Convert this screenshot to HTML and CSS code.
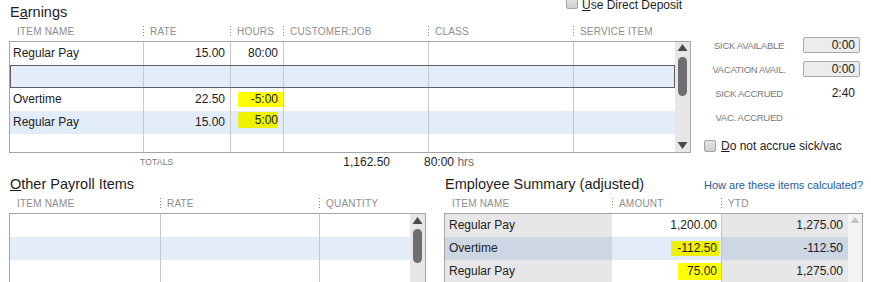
FILE: index.html
```html
<!DOCTYPE html>
<html>
<head>
<meta charset="utf-8">
<link rel="stylesheet" href="styles.css">
</head>
<body>
<div class="app">
  <div class="top">
    <section class="earnings">
      <div class="title-row">
        <h2 class="title">E<u>a</u>rnings</h2>
        <label class="check dd"><span class="box"></span><span><u>U</u>se Direct Deposit</span></label>
      </div>
      <div class="head cols-e">
        <div>ITEM NAME</div>
        <div class="sep">RATE</div>
        <div class="sep">HOURS</div>
        <div class="sep">CUSTOMER:JOB</div>
        <div class="sep">CLASS</div>
        <div class="sep">SERVICE ITEM</div>
      </div>
      <div class="grid e-grid">
        <div class="rows">
          <div class="row cols-e"><div>Regular Pay</div><div class="num">15.00</div><div class="num">80:00</div><div></div><div></div><div></div></div>
          <div class="row cols-e sel"><div></div><div></div><div></div><div></div><div></div><div></div></div>
          <div class="row cols-e"><div>Overtime</div><div class="num">22.50</div><div class="num"><span class="hl h1">-5:00</span></div><div></div><div></div><div></div></div>
          <div class="row cols-e alt"><div>Regular Pay</div><div class="num">15.00</div><div class="num"><span class="hl h2">5:00</span></div><div></div><div></div><div></div></div>
          <div class="row cols-e"><div></div><div></div><div></div><div></div><div></div><div></div></div>
        </div>
        <div class="sb">
          <svg class="arr" width="15" height="11" viewBox="0 0 15 11"><path d="M2.5 9 L7.5 2 L12.5 9 Z" fill="#4a4a4a"/></svg>
          <div class="thumb e-thumb"></div>
          <svg class="arr down" width="15" height="11" viewBox="0 0 15 11"><path d="M2.5 1 L12.5 1 L7.5 8 Z" fill="#4a4a4a"/></svg>
        </div>
      </div>
      <div class="totals">
        <span class="tl">TOTALS</span><span class="ta">1,162.50</span><span class="th">80:00 <span class="hrs">hrs</span></span>
      </div>
    </section>
    <aside class="side">
      <div class="accr">
        <span class="lbl">SICK AVAILABLE</span><span class="val boxed">0:00</span>
        <span class="lbl">VACATION AVAIL.</span><span class="val boxed">0:00</span>
        <span class="lbl">SICK ACCRUED</span><span class="val">2:40</span>
        <span class="lbl">VAC. ACCRUED</span><span class="val"></span>
      </div>
      <label class="check nac"><span class="box"></span><span><u>D</u>o not accrue sick/vac</span></label>
    </aside>
  </div>
  <div class="bottom">
    <section class="other">
      <div class="title-row2">
        <h2 class="title">Other Payroll Items</h2>
      </div>
      <div class="head head2 cols-o">
        <div>ITEM NAME</div>
        <div class="sep">RATE</div>
        <div class="sep">QUANTITY</div>
      </div>
      <div class="grid grid2">
        <div class="rows o-rows">
          <div class="row cols-o"><div></div><div></div><div></div></div>
          <div class="row cols-o alt"><div></div><div></div><div></div></div>
          <div class="row cols-o"><div></div><div></div><div></div></div>
        </div>
        <div class="sb">
          <svg class="arr" width="15" height="11" viewBox="0 0 15 11"><path d="M2.5 10 L7.5 3 L12.5 10 Z" fill="#4a4a4a"/></svg>
          <div class="thumb o-thumb"></div>
        </div>
      </div>
    </section>
    <section class="summary">
      <div class="title-row2 sum-title">
        <h2 class="title">Employee Summary (adjusted)</h2>
        <span class="link">How are these items calculated?</span>
      </div>
      <div class="head head2 cols-s">
        <div>ITEM NAME</div>
        <div class="sep">AMOUNT</div>
        <div class="sep">YTD</div>
      </div>
      <div class="grid grid2">
        <div class="rows s-rows">
          <div class="srow cols-s"><div class="nm">Regular Pay</div><div class="amt">1,200.00</div><div class="ytd">1,275.00</div></div>
          <div class="srow cols-s sel2"><div class="nm">Overtime</div><div class="amt"><span class="hl h3">-112.50</span></div><div class="ytd">-112.50</div></div>
          <div class="srow cols-s"><div class="nm">Regular Pay</div><div class="amt"><span class="hl h4">75.00</span></div><div class="ytd">1,275.00</div></div>
        </div>
        <div class="sb s-sb">
          <svg class="arr" width="14" height="11" viewBox="0 0 14 11"><path d="M2.5 9 L7 3 L11.5 9 Z" fill="#c4c4c4"/></svg>
        </div>
      </div>
    </section>
  </div>
</div>
</body>
</html>
```

FILE: styles.css
```css
* { box-sizing: border-box; margin: 0; padding: 0; }
body { margin: 0; font-family: "Liberation Sans", Arial, sans-serif; color: #222; background: #fff; }
.app { width: 871px; height: 282px; overflow: hidden; }

.top { display: flex; height: 171px; }
.earnings { margin-left: 9px; width: 682px; }
.title-row { height: 22px; display: flex; justify-content: space-between; align-items: flex-start; }
.title { font-size: 14.5px; font-weight: normal; line-height: 17px; padding-top: 4px; margin-left: 1px; color: #1e1e1e; white-space: nowrap; }
.title-row2 .title { padding-top: 0; }
.title-row2 .title::first-letter { text-decoration: underline; }

.check { display: flex; align-items: center; gap: 5px; font-size: 12px; line-height: 14px; color: #1e1e1e; white-space: nowrap; }
.box { width: 12px; height: 12px; border: 1px solid #a3a3a3; border-radius: 2px; background: linear-gradient(#e4e4e4, #d0d0d0); flex: none; }
.dd { margin-top: 0; margin-right: 9px; gap: 4px; line-height: 10px; align-items: flex-start; }
.dd .box { margin-top: -3px; }

.head { display: grid; height: 19px; padding-top: 4px; margin-left: 1px; font-size: 10px; line-height: 12px; color: #8e8e8e; letter-spacing: 0.2px; }
.head > div { padding-left: 7px; white-space: nowrap; }
.head .sep { background: repeating-linear-gradient(#8a8a8a 0 1px, transparent 1px 3px) 0 0 / 1px 10px no-repeat; }
.head2 { height: 20px; padding-top: 5px; }

.cols-e { grid-template-columns: 133px 87px 53px 145px 145px 102px; }
.cols-o { grid-template-columns: 150px 159px 92px; }
.cols-s { grid-template-columns: 167px 109px 127px; }

.grid { display: flex; border: 1px solid #a4a4a4; height: 112px; }
.rows { overflow: hidden; }
.e-grid .rows { width: 665px; }
.row { display: grid; height: 23px; font-size: 12px; line-height: 23px; }
.row > div { border-left: 1px solid #c8c8c8; padding: 0 5px; white-space: nowrap; }
.row > div:first-child { border-left: 0; padding-left: 3px; }
.num { text-align: right; }
.row.alt { background: #e3edfa; }
.row.sel { background: #e3edfa; outline: 1px solid #606060; outline-offset: -1px; }

.hl { display: inline-block; background: #ffff00; }
.h1 { line-height: 15px; padding: 0 5px 0 13px; margin-right: -5px; }
.h2 { line-height: 16px; padding-left: 17px; background: #eef200; border-radius: 2px; vertical-align: 2px; }
.h3 { line-height: 15px; padding: 0 2px 0 6px; margin-right: -2px; background: #eef200; }
.h4 { line-height: 17px; padding: 0 6px 0 9px; margin-right: -6px; }

.sb { width: 15px; background: #e7e7e7; display: flex; flex-direction: column; align-items: center; }
.arr { display: block; flex: none; }
.arr.down { margin-top: auto; margin-bottom: 0; }
.thumb { width: 9px; background: #6e6e6e; border-radius: 5px; flex: none; }
.e-thumb { margin-top: 4px; height: 39px; }
.o-thumb { margin-top: 4px; height: 34px; }

.totals { height: 18px; font-size: 12px; line-height: 18px; display: flex; white-space: nowrap; }
.tl { margin-left: 131px; width: 50px; font-size: 8.5px; color: #7a7a7a; letter-spacing: 0.2px; }
.ta { width: 200px; text-align: right; }
.th { margin-left: 34px; }
.hrs { color: #6a6a6a; }

.side { margin-left: 14px; width: 160px; }
.accr { display: grid; grid-template-columns: 88px 57px; column-gap: 10px; grid-auto-rows: 24px; align-items: center; margin-top: 33px; }
.lbl { font-size: 9.5px; color: #7a7a7a; text-align: center; letter-spacing: -0.3px; white-space: nowrap; }
.val { font-size: 12px; line-height: 14px; text-align: right; padding-right: 5px; color: #222; }
.boxed { height: 16px; border: 1px solid #a8a8a8; border-radius: 2px; background: #ececec; padding-right: 4px; }
.nac { margin-top: 10px; margin-left: -1px; }

.bottom { display: flex; padding-top: 5px; }
.other { margin-left: 9px; width: 417px; }
.summary { margin-left: 18px; width: 419px; }
.title-row2 { height: 17px; display: flex; }
.sum-title { justify-content: space-between; align-items: baseline; }
.sum-title .title::first-letter { text-decoration: none; }
.link { font-size: 11px; color: #2a5b9b; white-space: nowrap; }
.grid2 { height: 80px; }
.o-rows { width: 401px; }
.s-rows { width: 403px; }

.srow { display: grid; height: 23px; font-size: 12px; line-height: 23px; }
.srow > div { white-space: nowrap; }
.nm { background: #e7e7e7; padding-left: 4px; }
.amt { background: #fff; text-align: right; padding-right: 4px; }
.ytd { background: #e7e7e7; text-align: right; padding-right: 5px; border-left: 1px solid #c2c2c2; }
.sel2 .nm, .sel2 .ytd { background: #cdd7e4; }
.sel2 .amt { background: #e2ecf9; }
.s-sb { width: 14px; background: #f3f3f3; }
```
